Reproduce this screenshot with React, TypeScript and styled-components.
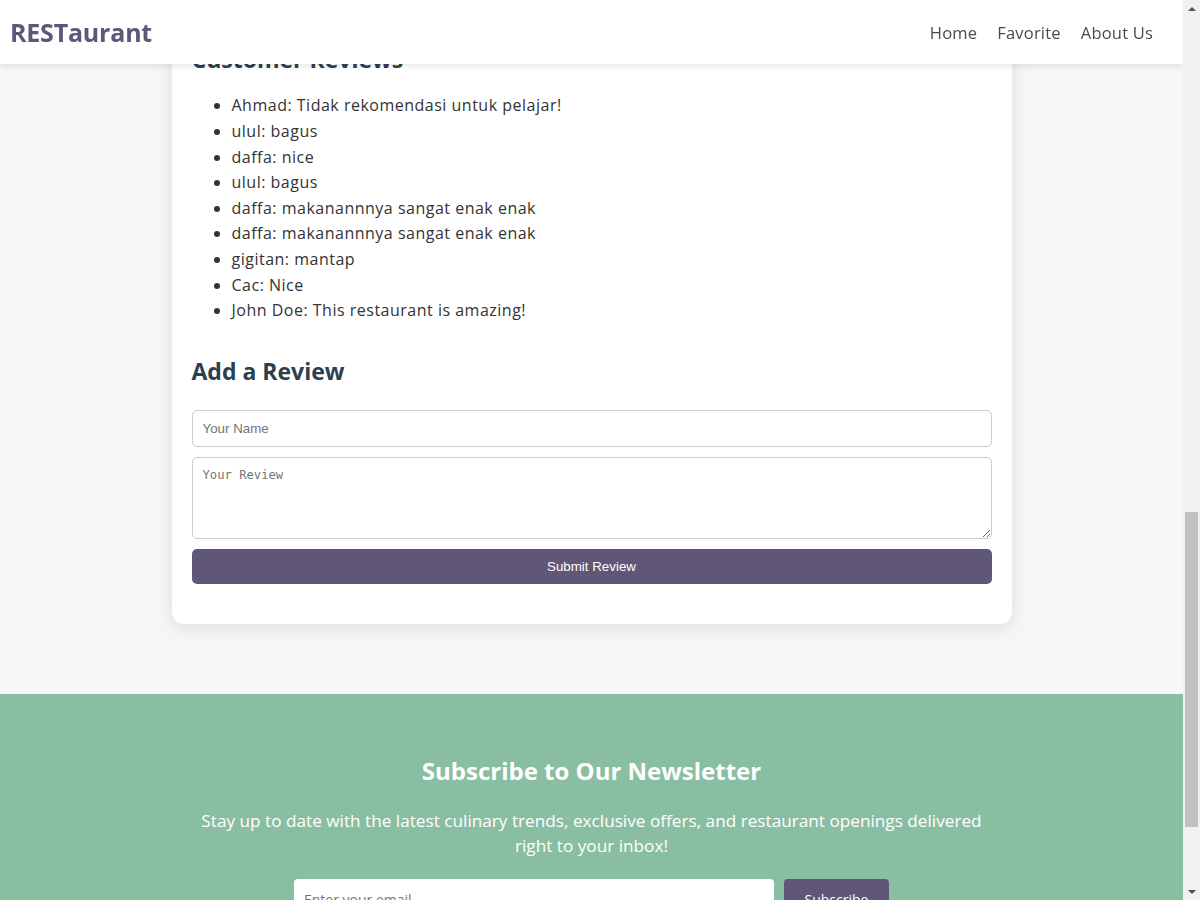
import React, { useLayoutEffect, useRef, useState } from "react";
import styled, { createGlobalStyle } from "styled-components";

const GlobalStyle = createGlobalStyle`
  html, body {
    margin: 0;
    padding: 0;
    height: 100%;
    overflow: hidden;
  }
  body {
    font-family: "Open Sans", "Noto Sans", sans-serif;
    color: #333;
  }
  #root { height: 100%; }
  * { box-sizing: border-box; }
`;

const Frame = styled.div`
  display: flex;
  height: 100vh;
`;

const Scroller = styled.div`
  flex: 1;
  min-width: 0;
  overflow-y: scroll;
  background: #f6f6f6;
  scrollbar-width: none;
  &::-webkit-scrollbar { display: none; }
`;

const ScrollBar = styled.div`
  flex: none;
  width: 17px;
  display: flex;
  flex-direction: column;
  background: #f1f1f1;
`;

const ArrowButton = styled.div`
  height: 17px;
  display: flex;
  align-items: center;
  justify-content: center;
`;

const Arrow = styled.span<{ $down?: boolean }>`
  width: 0;
  height: 0;
  border-left: 4px solid transparent;
  border-right: 4px solid transparent;
  ${(p) => (p.$down ? "border-top: 4px solid #505050;" : "border-bottom: 4px solid #505050;")}
`;

const Track = styled.div`
  flex: 1;
  position: relative;
`;

const Thumb = styled.div`
  position: absolute;
  left: 2px;
  right: 2px;
  background: #c1c1c1;
`;

const Header = styled.header`
  position: sticky;
  top: 0;
  z-index: 10;
  height: 64px;
  background: #fff;
  box-shadow: 0 2px 6px rgba(0, 0, 0, 0.1);
  display: flex;
  align-items: center;
  justify-content: space-between;
  padding: 0 30px 0 10px;
`;

const Logo = styled.a`
  font-size: 25px;
  font-weight: 700;
  color: #605677;
  text-decoration: none;
  letter-spacing: -0.2px;
`;

const NavList = styled.ul`
  list-style: none;
  margin: 0;
  padding: 0;
  display: flex;
  gap: 20px;
`;

const NavLink = styled.a`
  font-size: 16.5px;
  color: #4a4a4a;
  text-decoration: none;
  letter-spacing: 0.2px;
`;

const Main = styled.main`
  padding: 20px 0 70px;
`;

const Card = styled.article`
  max-width: 840px;
  margin: 0 auto;
  padding: 20px 20px 40px;
  background: #fff;
  border-radius: 12px;
  box-shadow: 0 4px 18px rgba(0, 0, 0, 0.1);
`;

const Hero = styled.div`
  height: 610px;
  border-radius: 10px;
  background: linear-gradient(135deg, #c9b79c, #8a6f55);
`;

const Title = styled.h2`
  font-size: 28px;
  font-weight: 700;
  color: #2c3e50;
  margin: 24px 0 12px;
`;

const Info = styled.p`
  font-size: 16px;
  line-height: 25.6px;
  margin: 0 0 8px;
  color: #333;
  letter-spacing: 0.5px;
`;

const SectionTitle = styled.h3<{ $gap: number }>`
  font-size: 23px;
  font-weight: 700;
  line-height: 29px;
  color: #2c3e50;
  margin: 0 0 ${(p) => p.$gap}px;
`;

const MenuGrid = styled.div`
  display: grid;
  grid-template-columns: 1fr 1fr;
  gap: 20px;
  margin: 24px 0 40px;
`;

const BulletList = styled.ul<{ $bottom: number }>`
  margin: 0 0 ${(p) => p.$bottom}px;
  padding-left: 40px;
`;

const Item = styled.li`
  font-size: 16px;
  line-height: 25.6px;
  color: #333;
  letter-spacing: 0.5px;
  &::marker { color: #333; }
`;

const Form = styled.form`
  display: flex;
  flex-direction: column;
  gap: 10px;
`;

const NameInput = styled.input`
  height: 37px;
  padding: 0 10px;
  border: 1px solid #ccc;
  border-radius: 5px;
  font-family: "Liberation Sans", Arial, sans-serif;
  font-size: 13.33px;
  color: #333;
  &::placeholder { color: #757575; }
`;

const ReviewArea = styled.textarea`
  height: 82px;
  padding: 10px;
  border: 1px solid #ccc;
  border-radius: 5px;
  font-family: "DejaVu Sans Mono", monospace;
  font-size: 12.2px;
  color: #333;
  resize: vertical;
  &::placeholder { color: #757575; }
`;

const SubmitButton = styled.button`
  height: 35px;
  border: none;
  border-radius: 5px;
  background: #605677;
  color: #fff;
  font-family: "Liberation Sans", Arial, sans-serif;
  font-size: 13.33px;
  cursor: pointer;
`;

const Footer = styled.footer`
  background: #8abea3;
  color: #fff;
  text-align: center;
  padding: 61px 20px 60px;
`;

const NewsTitle = styled.h2`
  font-size: 24px;
  line-height: 31px;
  font-weight: 700;
  margin: 0;
`;

const NewsText = styled.p`
  max-width: 800px;
  margin: 22px auto 21px;
  font-size: 17.2px;
  line-height: 25px;
`;

const NewsForm = styled.form`
  display: flex;
  justify-content: center;
  gap: 10px;
`;

const EmailInput = styled.input`
  width: 480px;
  height: 42px;
  padding: 0 10px;
  border: none;
  border-radius: 4px;
  font-family: "Open Sans", sans-serif;
  font-size: 14px;
  &::placeholder { color: #757575; }
`;

const SubscribeButton = styled.button`
  width: 105px;
  height: 42px;
  border: none;
  border-radius: 4px;
  background: #605677;
  color: #fff;
  font-family: "Open Sans", sans-serif;
  font-size: 14px;
`;

const Copyright = styled.div`
  background: #605677;
  color: #fff;
  text-align: center;
  font-size: 14px;
  padding: 30px 20px;
`;

const reviews = [
  "Ahmad: Tidak rekomendasi untuk pelajar!",
  "ulul: bagus",
  "daffa: nice",
  "ulul: bagus",
  "daffa: makanannnya sangat enak enak",
  "daffa: makanannnya sangat enak enak",
  "gigitan: mantap",
  "Cac: Nice",
  "John Doe: This restaurant is amazing!",
];

const foods = [
  "Paket rosemary", "Toastie salmon", "Bebek crepes", "Salad lemon", "Daging sapi",
  "Salad tuna", "Sosis squash", "Kari kacang", "Bebek panggang", "Sup kepiting",
  "Roti bakar", "Nasi goreng", "Ayam bakar",
];
const drinks = [
  "Es krim", "Sirup", "Jus apel", "Jus jeruk", "Coklat dingin", "Air",
  "Es kopi", "Jus alpukat", "Jus mangga", "Teh manis", "Kopi espresso",
  "Minuman soda", "Jus tomat", "Es teh",
];

export default function App() {
  const scrollRef = useRef<HTMLDivElement>(null);
  const footerRef = useRef<HTMLElement>(null);
  const trackRef = useRef<HTMLDivElement>(null);
  const [thumb, setThumb] = useState({ top: 0, height: 0 });

  const updateThumb = () => {
    const s = scrollRef.current;
    const t = trackRef.current;
    if (!s || !t) return;
    const len = t.clientHeight;
    setThumb({
      top: (s.scrollTop / s.scrollHeight) * len,
      height: (s.clientHeight / s.scrollHeight) * len,
    });
  };

  useLayoutEffect(() => {
    const s = scrollRef.current;
    const f = footerRef.current;
    if (s && f) s.scrollTop = f.offsetTop - s.offsetTop - 694;
    updateThumb();
  }, []);

  return (
    <>
      <GlobalStyle />
      <Frame>
        <Scroller ref={scrollRef} onScroll={updateThumb}>
          <Header>
            <Logo href="#">RESTaurant</Logo>
            <nav>
              <NavList>
                <li><NavLink href="#">Home</NavLink></li>
                <li><NavLink href="#">Favorite</NavLink></li>
                <li><NavLink href="#">About Us</NavLink></li>
              </NavList>
            </nav>
          </Header>
          <Main>
            <Card>
              <Hero />
              <Title>Melting Pot</Title>
              <Info>Alamat: Jln. Pandeglang no 19</Info>
              <Info>Kota: Medan</Info>
              <Info>Rating: 4.2</Info>
              <Info>
                Lorem ipsum dolor sit amet, consectetuer adipiscing elit. Aenean commodo ligula eget dolor.
                Aenean massa. Cum sociis natoque penatibus et magnis dis parturient montes, nascetur ridiculus mus.
                Donec quam felis, ultricies nec, pellentesque eu, pretium quis, sem. Nulla consequat massa quis enim.
              </Info>
              <MenuGrid>
                <div>
                  <SectionTitle $gap={16}>Foods</SectionTitle>
                  <BulletList $bottom={0}>
                    {foods.map((f) => <Item key={f}>{f}</Item>)}
                  </BulletList>
                </div>
                <div>
                  <SectionTitle $gap={16}>Drinks</SectionTitle>
                  <BulletList $bottom={0}>
                    {drinks.map((d) => <Item key={d}>{d}</Item>)}
                  </BulletList>
                </div>
              </MenuGrid>
              <SectionTitle $gap={19}>Customer Reviews</SectionTitle>
              <BulletList $bottom={33}>
                {reviews.map((r, i) => <Item key={i}>{r}</Item>)}
              </BulletList>
              <SectionTitle $gap={24}>Add a Review</SectionTitle>
              <Form onSubmit={(e) => e.preventDefault()}>
                <NameInput type="text" placeholder="Your Name" />
                <ReviewArea placeholder="Your Review" />
                <SubmitButton type="submit">Submit Review</SubmitButton>
              </Form>
            </Card>
          </Main>
          <Footer ref={footerRef}>
            <NewsTitle>Subscribe to Our Newsletter</NewsTitle>
            <NewsText>
              Stay up to date with the latest culinary trends, exclusive offers, and restaurant openings
              delivered right to your inbox!
            </NewsText>
            <NewsForm onSubmit={(e) => e.preventDefault()}>
              <EmailInput type="email" placeholder="Enter your email" />
              <SubscribeButton type="submit">Subscribe</SubscribeButton>
            </NewsForm>
          </Footer>
          <Copyright>Copyright © 2024 - RESTaurant</Copyright>
        </Scroller>
        <ScrollBar aria-hidden="true">
          <ArrowButton><Arrow /></ArrowButton>
          <Track ref={trackRef}>
            <Thumb style={{ top: thumb.top, height: thumb.height }} />
          </Track>
          <ArrowButton><Arrow $down /></ArrowButton>
        </ScrollBar>
      </Frame>
    </>
  );
}
